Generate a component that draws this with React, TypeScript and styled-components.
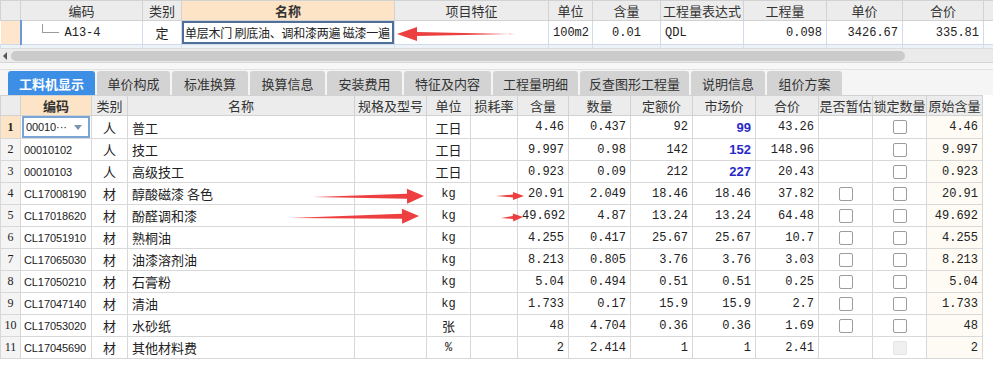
import React from 'react';
import styled, { createGlobalStyle } from 'styled-components';

const GlobalStyle = createGlobalStyle`
  html, body {
    margin: 0;
    padding: 0;
    background: #ffffff;
  }
  body {
    font-family: 'Liberation Sans', 'Noto Sans CJK SC', sans-serif;
    font-size: 13px;
    color: #222;
  }
`;

const CN = `'Noto Sans CJK SC', 'Liberation Sans', sans-serif`;
const MONO = `'Liberation Mono', 'Noto Sans CJK SC', monospace`;

const Page = styled.div`
  position: relative;
  width: 993px;
  height: 389px;
  overflow: hidden;
  background: #ffffff;
`;

const Grid = styled.table<{ width: number }>`
  width: ${({ width }) => width}px;
  table-layout: fixed;
  border-collapse: collapse;
  font-size: 12px;
`;

const HeadCell = styled.th<{ $peach?: boolean }>`
  height: 19px;
  padding: 0;
  font-family: ${CN};
  font-size: 13px;
  font-weight: ${({ $peach }) => ($peach ? 700 : 400)};
  color: #333;
  text-align: center;
  white-space: nowrap;
  overflow: hidden;
  background: ${({ $peach }) => ($peach ? '#fde4c6' : '#ececec')};
  border: 1px solid #d2d2d2;
`;

const Cell = styled.td<{
  $align?: 'left' | 'center' | 'right';
  $mono?: boolean;
  $cn?: boolean;
  $bg?: string;
}>`
  height: 21px;
  padding: 0 4px;
  text-align: ${({ $align = 'left' }) => $align};
  font-family: ${({ $mono, $cn }) => ($mono ? MONO : $cn ? CN : `'Liberation Sans', sans-serif`)};
  font-size: ${({ $cn }) => ($cn ? '13px' : '12px')};
  white-space: nowrap;
  overflow: hidden;
  background: ${({ $bg = '#ffffff' }) => $bg};
  border: 1px solid #d8d8d8;
`;

const CodeCell = styled(Cell)`
  padding: 0 3px;
  font-size: 11px;
  letter-spacing: -0.1px;
`;

const TopRowCell = styled(Cell)`
  height: 22px;
  border-color: #cfdbe9;
`;

const NumCell = styled.td<{ $active?: boolean }>`
  height: 21px;
  padding: 0;
  text-align: center;
  font-family: 'Liberation Serif', serif;
  font-size: 12px;
  font-weight: ${({ $active }) => ($active ? 700 : 400)};
  background: ${({ $active }) => ($active ? '#fde4c6' : '#f4f4f4')};
  border: 1px solid #d8d8d8;
`;

const Indicator = styled.td`
  padding: 0;
  background: #fde6cb;
  border-right: 2px solid #6a9bd8;
  border-bottom: 1px solid #cfdbe9;
`;

const TreeCode = styled.div`
  display: flex;
  align-items: center;
  gap: 6px;
  padding-left: 16px;
  font-family: ${MONO};
  font-size: 12px;
`;

const TreeLine = styled.span`
  width: 16px;
  height: 8px;
  margin-top: -8px;
  border-left: 1px solid #9a9a9a;
  border-bottom: 1px solid #9a9a9a;
`;

const EditBox = styled.div`
  height: 19px;
  line-height: 19px;
  padding: 0 1px;
  font-family: ${CN};
  font-size: 12px;
  letter-spacing: -0.25px;
  border: 2px solid #4f6e9a;
  white-space: nowrap;
  overflow: hidden;
`;

const ClipRow = styled.td`
  height: 3px;
  padding: 0;
  background: #eef3fa;
  border-left: 1px solid #d8dfe8;
  border-right: 1px solid #d8dfe8;
`;

const ScrollTrack = styled.div`
  display: flex;
  align-items: center;
  gap: 4px;
  height: 13px;
  padding-left: 3px;
  background: #ebebeb;
  border-top: 1px solid #dcdcdc;
  border-bottom: 1px solid #d6d6d6;
`;

const ScrollArrow = styled.span`
  width: 0;
  height: 0;
  border-top: 4px solid transparent;
  border-bottom: 4px solid transparent;
  border-right: 4px solid #555;
`;

const ScrollThumb = styled.div`
  width: 894px;
  height: 10px;
  border-radius: 5px;
  background: #cbcbcb;
`;

const Spacer = styled.div`
  height: 6px;
  background: #f7f7f7;
  border-bottom: 1px solid #e2e2e2;
`;

const TabBar = styled.div`
  display: flex;
  align-items: flex-end;
  gap: 2px;
  height: 25px;
  padding-left: 8px;
  background: #f5f5f5;
`;

const Tab = styled.div<{ w: number; $active?: boolean }>`
  width: ${({ w }) => w}px;
  height: 24px;
  display: flex;
  align-items: center;
  justify-content: center;
  font-family: ${CN};
  font-size: 13px;
  font-weight: ${({ $active }) => ($active ? 700 : 400)};
  color: ${({ $active }) => ($active ? '#ffffff' : '#333')};
  background: ${({ $active }) => ($active ? '#3d8fe6' : '#d3d3d3')};
  border-radius: 3px 3px 0 0;
`;

const SelectedCode = styled.div`
  display: flex;
  align-items: center;
  justify-content: space-between;
  height: 18px;
  margin: 0 -2px;
  padding: 0 6px 0 2px;
  border: 2px solid #7aa3d6;
`;

const DropTri = styled.span`
  width: 0;
  height: 0;
  border-left: 4px solid transparent;
  border-right: 4px solid transparent;
  border-top: 5px solid #7b92b0;
`;

const Check = styled.span<{ $disabled?: boolean }>`
  display: inline-block;
  width: 12px;
  height: 12px;
  vertical-align: middle;
  border-radius: 2px;
  background: ${({ $disabled }) => ($disabled ? '#f0f0f0' : '#ffffff')};
  border: 1px solid ${({ $disabled }) => ($disabled ? '#e4e4e4' : '#9c9c9c')};
`;

const Market = styled.span<{ $blue?: boolean }>`
  color: ${({ $blue }) => ($blue ? '#2929c8' : '#222')};
  font-weight: ${({ $blue }) => ($blue ? 700 : 400)};
  font-family: ${({ $blue }) => ($blue ? `'Liberation Sans', sans-serif` : MONO)};
  font-size: ${({ $blue }) => ($blue ? '13px' : '12px')};
`;

const ArrowLayer = styled.svg`
  position: absolute;
  pointer-events: none;
  overflow: visible;
`;

interface ArrowProps {
  from: [number, number];
  to: [number, number];
  head: number;
  headH: number;
  shaft: number;
}

function Arrow({ from, to, head, headH, shaft }: ArrowProps) {
  const [x1, y1] = from;
  const [x2, y2] = to;
  const dx = x2 - x1;
  const dy = y2 - y1;
  const len = Math.hypot(dx, dy);
  const ux = dx / len;
  const uy = dy / len;
  const nx = -uy;
  const ny = ux;
  const bx = x2 - ux * head;
  const by = y2 - uy * head;
  const pts = [
    [x1, y1],
    [bx + (nx * shaft) / 2, by + (ny * shaft) / 2],
    [bx + (nx * headH) / 2, by + (ny * headH) / 2],
    [x2, y2],
    [bx - (nx * headH) / 2, by - (ny * headH) / 2],
    [bx - (nx * shaft) / 2, by - (ny * shaft) / 2],
  ]
    .map((p) => p.join(','))
    .join(' ');
  return (
    <ArrowLayer style={{ left: 0, top: 0 }} width={993} height={389}>
      <polygon points={pts} fill="#ec2f2f" opacity={0.92} />
    </ArrowLayer>
  );
}

const topCols = [20, 122, 39, 213, 154, 44, 68, 83, 83, 76, 81, 10];
const topHeads = ['', '编码', '类别', '名称', '项目特征', '单位', '含量', '工程量表达式', '工程量', '单价', '合价', ''];

const tabs: [string, number][] = [
  ['工料机显示', 87],
  ['单价构成', 73],
  ['标准换算', 76],
  ['换算信息', 75],
  ['安装费用', 75],
  ['特征及内容', 87],
  ['工程量明细', 85],
  ['反查图形工程量', 109],
  ['说明信息', 74],
  ['组价方案', 75],
];

const cols = [20, 71, 36, 227, 72, 44, 47, 51, 62, 62, 63, 63, 54, 54, 56];
const heads = ['', '编码', '类别', '名称', '规格及型号', '单位', '损耗率', '含量', '数量', '定额价', '市场价', '合价', '是否暂估', '锁定数量', '原始含量'];

interface Row {
  code: string;
  kind: string;
  name: string;
  unit: string;
  qty: string;
  amount: string;
  base: string;
  market: string;
  total: string;
  est: 'none' | 'box';
  lock: 'box' | 'disabled';
}

const rows: Row[] = [
  { code: '00010···', kind: '人', name: '普工', unit: '工日', qty: '4.46', amount: '0.437', base: '92', market: '99', total: '43.26', est: 'none', lock: 'box' },
  { code: '00010102', kind: '人', name: '技工', unit: '工日', qty: '9.997', amount: '0.98', base: '142', market: '152', total: '148.96', est: 'none', lock: 'box' },
  { code: '00010103', kind: '人', name: '高级技工', unit: '工日', qty: '0.923', amount: '0.09', base: '212', market: '227', total: '20.43', est: 'none', lock: 'box' },
  { code: 'CL17008190', kind: '材', name: '醇酸磁漆 各色', unit: 'kg', qty: '20.91', amount: '2.049', base: '18.46', market: '18.46', total: '37.82', est: 'box', lock: 'box' },
  { code: 'CL17018620', kind: '材', name: '酚醛调和漆', unit: 'kg', qty: '49.692', amount: '4.87', base: '13.24', market: '13.24', total: '64.48', est: 'box', lock: 'box' },
  { code: 'CL17051910', kind: '材', name: '熟桐油', unit: 'kg', qty: '4.255', amount: '0.417', base: '25.67', market: '25.67', total: '10.7', est: 'box', lock: 'box' },
  { code: 'CL17065030', kind: '材', name: '油漆溶剂油', unit: 'kg', qty: '8.213', amount: '0.805', base: '3.76', market: '3.76', total: '3.03', est: 'box', lock: 'box' },
  { code: 'CL17050210', kind: '材', name: '石膏粉', unit: 'kg', qty: '5.04', amount: '0.494', base: '0.51', market: '0.51', total: '0.25', est: 'box', lock: 'box' },
  { code: 'CL17047140', kind: '材', name: '清油', unit: 'kg', qty: '1.733', amount: '0.17', base: '15.9', market: '15.9', total: '2.7', est: 'box', lock: 'box' },
  { code: 'CL17053020', kind: '材', name: '水砂纸', unit: '张', qty: '48', amount: '4.704', base: '0.36', market: '0.36', total: '1.69', est: 'box', lock: 'box' },
  { code: 'CL17045690', kind: '材', name: '其他材料费', unit: '%', qty: '2', amount: '2.414', base: '1', market: '1', total: '2.41', est: 'none', lock: 'disabled' },
];

export default function App() {
  return (
    <Page>
      <GlobalStyle />

      <Grid width={993}>
        <colgroup>
          {topCols.map((w, i) => (
            <col key={i} style={{ width: w }} />
          ))}
        </colgroup>
        <thead>
          <tr>
            {topHeads.map((h, i) => (
              <HeadCell key={i} $peach={h === '名称'}>
                {h}
              </HeadCell>
            ))}
          </tr>
        </thead>
        <tbody>
          <tr>
            <Indicator />
            <TopRowCell>
              <TreeCode>
                <TreeLine />
                A13-4
              </TreeCode>
            </TopRowCell>
            <TopRowCell $align="center" $cn>
              定
            </TopRowCell>
            <TopRowCell style={{ padding: 0 }}>
              <EditBox>单层木门 刷底油、调和漆两遍 磁漆一遍</EditBox>
            </TopRowCell>
            <TopRowCell />
            <TopRowCell $mono>100m2</TopRowCell>
            <TopRowCell $mono $align="center">
              0.01
            </TopRowCell>
            <TopRowCell $mono>QDL</TopRowCell>
            <TopRowCell $mono $align="right">
              0.098
            </TopRowCell>
            <TopRowCell $mono $align="right">
              3426.67
            </TopRowCell>
            <TopRowCell $mono $align="right">
              335.81
            </TopRowCell>
            <TopRowCell />
          </tr>
          <tr>
            {topCols.map((_, i) => (
              <ClipRow key={i} />
            ))}
          </tr>
        </tbody>
      </Grid>

      <ScrollTrack>
        <ScrollArrow />
        <ScrollThumb />
      </ScrollTrack>
      <Spacer />

      <TabBar>
        {tabs.map(([label, w], i) => (
          <Tab key={label} w={w} $active={i === 0}>
            {label}
          </Tab>
        ))}
      </TabBar>

      <Grid width={982}>
        <colgroup>
          {cols.map((w, i) => (
            <col key={i} style={{ width: w }} />
          ))}
        </colgroup>
        <thead>
          <tr>
            {heads.map((h, i) => (
              <HeadCell key={i} $peach={h === '编码'}>
                {h}
              </HeadCell>
            ))}
          </tr>
        </thead>
        <tbody>
          {rows.map((r, i) => (
            <tr key={r.code}>
              <NumCell $active={i === 0}>{i + 1}</NumCell>
              <CodeCell>
                {i === 0 ? (
                  <SelectedCode>
                    {r.code}
                    <DropTri />
                  </SelectedCode>
                ) : (
                  r.code
                )}
              </CodeCell>
              <Cell $align="center" $cn>
                {r.kind}
              </Cell>
              <Cell $cn>{r.name}</Cell>
              <Cell />
              <Cell $align="center" $cn={r.unit !== 'kg' && r.unit !== '%'} $mono={r.unit === 'kg' || r.unit === '%'}>
                {r.unit}
              </Cell>
              <Cell />
              <Cell $mono $align="right">
                {r.qty}
              </Cell>
              <Cell $mono $align="right">
                {r.amount}
              </Cell>
              <Cell $mono $align="right">
                {r.base}
              </Cell>
              <Cell $align="right">
                <Market $blue={i < 3}>{r.market}</Market>
              </Cell>
              <Cell $mono $align="right">
                {r.total}
              </Cell>
              <Cell $align="center">{r.est === 'box' && <Check />}</Cell>
              <Cell $align="center">
                <Check $disabled={r.lock === 'disabled'} />
              </Cell>
              <Cell $mono $align="right" $bg="#fdfbf3">
                {r.qty}
              </Cell>
            </tr>
          ))}
        </tbody>
      </Grid>

      <Arrow from={[515, 34]} to={[397, 34]} head={20} headH={14} shaft={4} />
      <Arrow from={[313, 197]} to={[424, 196]} head={17} headH={15} shaft={5} />
      <Arrow from={[290, 218]} to={[419, 216]} head={17} headH={15} shaft={5} />
      <Arrow from={[496, 196]} to={[524, 196]} head={11} headH={8} shaft={3} />
      <Arrow from={[501, 218]} to={[523, 217]} head={10} headH={8} shaft={3} />
    </Page>
  );
}
